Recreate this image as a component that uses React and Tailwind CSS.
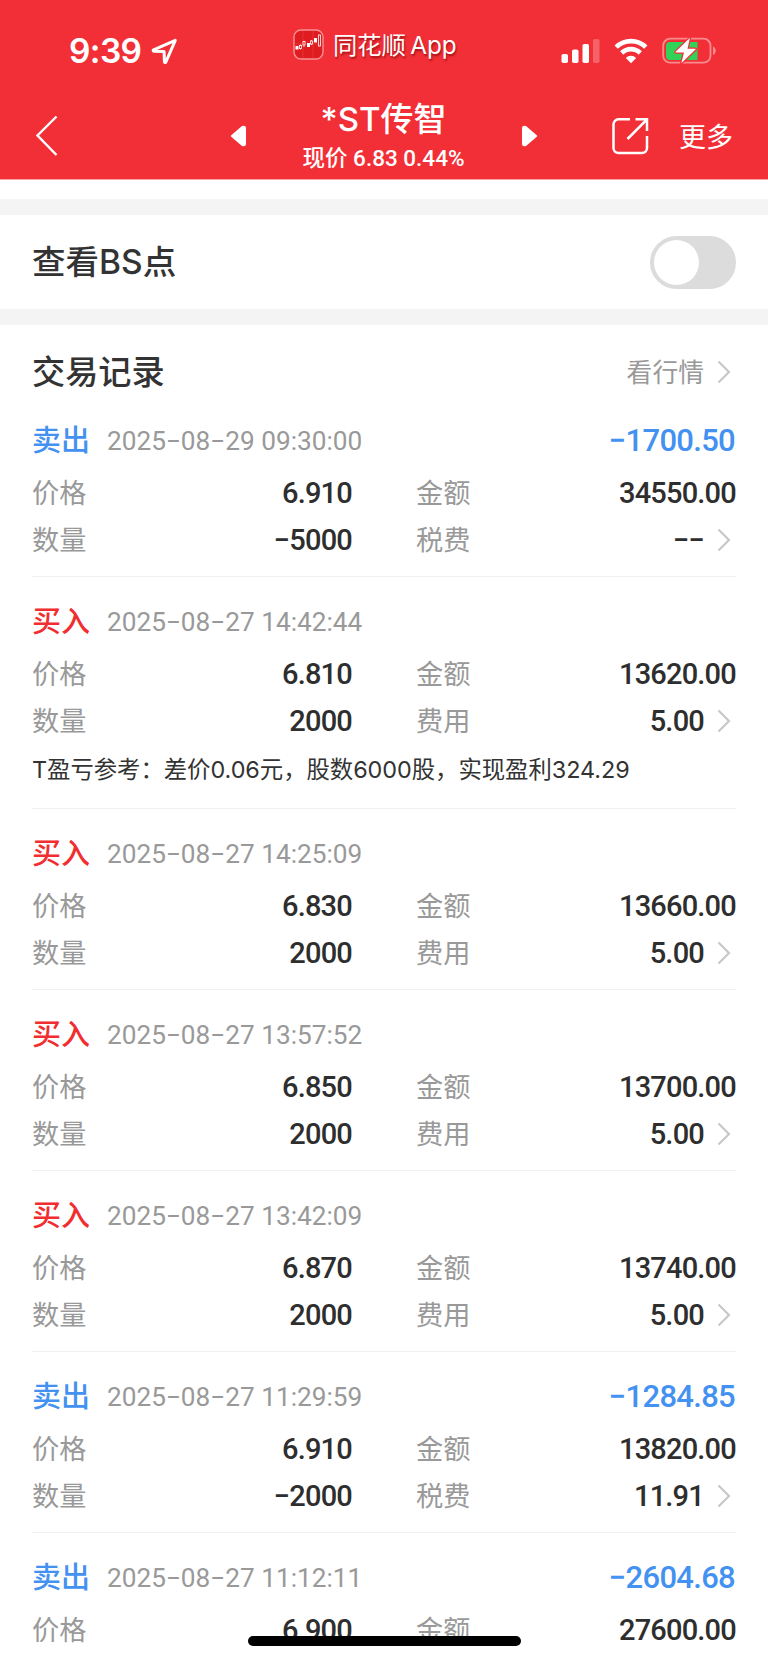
const records = [
  {
    side: "sell",
    time: "2025−08−29 09:30:00",
    profit: "−1700.50",
    price: "6.910",
    amount: "34550.00",
    qty: "−5000",
    fee: "−−",
  },
  {
    side: "buy",
    time: "2025−08−27 14:42:44",
    price: "6.810",
    amount: "13620.00",
    qty: "2000",
    fee: "5.00",
    note: "T盈亏参考：差价0.06元，股数6000股，实现盈利324.29",
  },
  {
    side: "buy",
    time: "2025−08−27 14:25:09",
    price: "6.830",
    amount: "13660.00",
    qty: "2000",
    fee: "5.00",
  },
  {
    side: "buy",
    time: "2025−08−27 13:57:52",
    price: "6.850",
    amount: "13700.00",
    qty: "2000",
    fee: "5.00",
  },
  {
    side: "buy",
    time: "2025−08−27 13:42:09",
    price: "6.870",
    amount: "13740.00",
    qty: "2000",
    fee: "5.00",
  },
  {
    side: "sell",
    time: "2025−08−27 11:29:59",
    profit: "−1284.85",
    price: "6.910",
    amount: "13820.00",
    qty: "−2000",
    fee: "11.91",
  },
  {
    side: "sell",
    time: "2025−08−27 11:12:11",
    profit: "−2604.68",
    price: "6.900",
    amount: "27600.00",
  },
];

const Chevron = () => (
  <svg width="14" height="24" viewBox="0 0 14 24" className="-mt-0.5 mr-[5px] ml-[13px] shrink-0">
    <path d="M1.5 1.5 12 12 1.5 22.5" fill="none" stroke="#c8c8c8" strokeWidth="2.2" />
  </svg>
);

const StatusBar = () => (
  <div className="flex h-[93px] items-start text-white">
    {/* Clock and location arrow */}
    <div className="flex w-[292px] items-center gap-2.5 pt-[31px] pl-[69px]">
      <span className="w-[72px] font-['Inter','Noto_Sans_CJK_SC',sans-serif] text-[33.5px] leading-10 font-semibold tracking-[-0.6px] whitespace-nowrap">
        9:39
      </span>
      <svg width="27" height="27" viewBox="0 0 27 27">
        <path
          d="M24.3 2.3 2.6 11.9c-.8.4-.5 1.4.3 1.4l10.2.3.3 10.1c0 .9 1.1 1.2 1.4.4z"
          fill="none"
          stroke="white"
          strokeWidth="3"
          strokeLinejoin="round"
        />
      </svg>
    </div>

    {/* App badge */}
    <div className="flex w-[269px] items-center pt-[27px]">
      <svg width="32" height="32" viewBox="0 0 32 32" className="ml-px">
        <rect x="1" y="1" width="29" height="29" rx="7" fill="#df1c20" stroke="#f79095" strokeWidth="1.4" />
        <path d="M1 15h29M10 2v27M20 2v27" stroke="#ec4448" strokeWidth=".5" />
        <g fill="white">
          <rect x="2.5" y="17" width="3" height="3.5" />
          <rect x="14" y="14" width="3" height="4" />
          <rect x="21" y="9" width="3" height="4.5" />
        </g>
        <g fill="none" stroke="white" strokeWidth=".8">
          <path d="M7.5 15.5v5M11 12v6M18.5 11v5" />
          <rect x="6.5" y="16.5" width="2" height="3" fill="#df1c20" />
          <rect x="10" y="12.5" width="2" height="3.5" fill="#df1c20" />
          <rect x="17.5" y="12" width="2" height="3" fill="#df1c20" />
          <rect x="25.5" y="6" width="2" height="11" />
        </g>
      </svg>
      <span className="ml-[8px] font-['Inter','Noto_Sans_CJK_SC',sans-serif] text-[24.3px] leading-9 whitespace-nowrap [word-spacing:-2.5px] [text-shadow:1px_2px_2px_rgba(110,0,0,0.6)]">
        同花顺 App
      </span>
    </div>

    {/* Signal, wifi, battery */}
    <div className="flex items-start pt-[37px]">
      <svg width="40" height="27" viewBox="0 0 40 27" fill="white">
        <rect x="0.5" y="17" width="6.5" height="9" rx="1.8" />
        <rect x="11" y="12.5" width="6.5" height="13.5" rx="1.8" />
        <rect x="21.5" y="7" width="6.5" height="19" rx="1.8" />
        <rect x="32" y="2" width="6.5" height="24" rx="1.8" opacity=".25" />
      </svg>
      <svg width="34" height="27" viewBox="0 0 34 27" className="ml-[13px]">
        <g fill="none" stroke="white" strokeWidth="4.6">
          <path d="M2.2 10.2a21 21 0 0 1 29.6 0" />
          <path d="M7.7 16a13.2 13.2 0 0 1 18.6 0" />
        </g>
        <path d="M17 26.2 11.8 21a7.4 7.4 0 0 1 10.4 0z" fill="white" />
      </svg>
      <svg width="56" height="27" viewBox="0 0 56 27" className="ml-[14px]">
        <rect x="1.2" y="1.7" width="47.3" height="24" rx="7" fill="none" stroke="#f88b90" strokeWidth="1.8" />
        <path d="M51 9.5c3.6 1.2 3.6 7.2 0 8.4z" fill="#f88b90" />
        <path d="M8 5h27.5v18H8a4 4 0 0 1-4-4V9a4 4 0 0 1 4-4z" fill="#32d158" />
        <path
          d="M28 .8 13.8 14.6q-.8.9.4.9H22l-2.7 10.8L33.5 12.600q.8-.9-.4-.9h-7.600z"
          fill="white"
          stroke="#f22f37"
          strokeWidth="2.5"
          strokeLinejoin="round"
          paintOrder="stroke"
        />
      </svg>
    </div>
  </div>
);

const NavBar = () => (
  <div className="flex h-[86px] items-start text-white">
    <svg width="24" height="42" viewBox="0 0 24 42" className="mt-[22px] ml-[35px]">
      <path d="M21.5 1.5 2.5 20.5l19 19.5" fill="none" stroke="white" strokeWidth="2.4" />
    </svg>
    <svg width="17" height="24" viewBox="0 0 17 24" className="mt-[31px] ml-[171px]">
      <path d="M12 2 1.500 11q-1.500 1 0 2L12 22q4 1 4-2V4q0-3-4-2z" fill="white" />
    </svg>
    <div className="flex w-[273px] flex-col items-center font-['Roboto','Noto_Sans_CJK_SC',sans-serif] whitespace-nowrap">
      <h1 className="mt-[5px] font-['Inter','Noto_Sans_CJK_SC',sans-serif] text-[33px] leading-[42px] font-medium">
        *ST传智
      </h1>
      <p className="mt-1 text-[22.5px] leading-7 font-medium">现价 6.83 0.44%</p>
    </div>
    <svg width="17" height="24" viewBox="0 0 17 24" className="mt-[31px] ml-px">
      <path d="M5 2l10.500 9q1.500 1 0 2L5 22q-4 1-4-2V4q0-3 4-2z" fill="white" />
    </svg>
    <svg
      width="38"
      height="38"
      viewBox="0 0 38 38"
      className="mt-[24px] ml-[73px]"
      fill="none"
      stroke="white"
      strokeWidth="2.500"
    >
      <path d="M19 2.300H7.500a5 5 0 0 0-5 5V31a5 5 0 0 0 5 5H31a5 5 0 0 0 5-5V19" />
      <path d="M24.500 2.300H36V14M36 2.300 16.500 22" />
    </svg>
    <span className="mt-[23px] ml-[30px] font-['Noto_Sans_CJK_SC',sans-serif] text-[27px] leading-10">
      更多
    </span>
  </div>
);

const Field = ({ label, value, arrow }) => (
  <div className="flex h-[47px] items-center justify-between">
    <span className="pt-px text-[27.2px] text-[#999]">{label}</span>
    <span className="flex items-center text-[29px] font-medium tracking-[-0.8px] text-[#2e2e2e]">
      {value}
      {arrow && <Chevron />}
    </span>
  </div>
);

const Record = ({ item }) => {
  const isSell = item.side === "sell";

  return (
    <li className="border-b border-[#f1f1f1] pt-[17px] pb-3 last:border-b-0">
      <div className="flex h-[57px] items-center">
        <span
          className={
            isSell
              ? "text-[29px] font-medium text-[#4391f0]"
              : "text-[29px] font-medium text-[#f22d2f]"
          }
        >
          {isSell ? "卖出" : "买入"}
        </span>
        <span className="ml-[17px] text-[26.2px] text-[#999]">{item.time}</span>
        {item.profit && (
          <span className="mr-px ml-auto text-[31px] font-medium tracking-[-0.7px] text-[#4391f0]">
            {item.profit}
          </span>
        )}
      </div>
      <div className="grid grid-cols-2 gap-x-16">
        <Field label="价格" value={item.price} />
        <Field label="金额" value={item.amount} />
        {item.qty && <Field label="数量" value={item.qty} />}
        {item.fee && (
          <Field label={isSell ? "税费" : "费用"} value={item.fee} arrow />
        )}
      </div>
      {item.note && (
        <p className="mb-0.5 flex h-[49px] items-center font-['Inter','Noto_Sans_CJK_SC',sans-serif] text-[23.4px] tracking-[-0.05px] whitespace-nowrap text-[#333]">
          {item.note}
        </p>
      )}
    </li>
  );
};

const App = () => {
  return (
    <div className="relative h-[1663px] w-[768px] overflow-hidden bg-white font-['Roboto','Noto_Sans_CJK_SC',sans-serif] text-[#333]">
      <header className="h-[180px] border-b border-[#f9a5a8] bg-[#f22f37]">
        <StatusBar />
        <NavBar />
      </header>

      {/* BS switch */}
      <section className="mt-[19px] flex h-[110px] items-center justify-between border-t-[16px] border-[#f4f4f4] px-8">
        <span className="font-['Inter','Noto_Sans_CJK_SC',sans-serif] text-[33.5px] font-medium">
          查看BS点
        </span>
        <button
          className="flex h-[53px] w-[86px] items-center rounded-full bg-[#dcdcdc] pl-1"
          aria-label="查看BS点"
        >
          <span className="size-[45px] rounded-full bg-white" />
        </button>
      </section>

      {/* Trade records */}
      <section className="border-t-[16px] border-[#f4f4f4] px-8 pt-[23px]">
        <div className="flex h-12 items-center justify-between">
          <h2 className="pt-0.5 text-[33.2px] font-medium">交易记录</h2>
          <span className="flex items-center pt-0.5 text-[25.8px] text-[#999]">
            看行情
            <Chevron />
          </span>
        </div>
        <ul>
          {records.map((item) => (
            <Record key={item.time} item={item} />
          ))}
        </ul>
      </section>

      {/* Home indicator */}
      <div className="absolute bottom-[17px] left-[248px] h-2.5 w-[273px] rounded-full bg-black" />
    </div>
  );
};

export default App;
